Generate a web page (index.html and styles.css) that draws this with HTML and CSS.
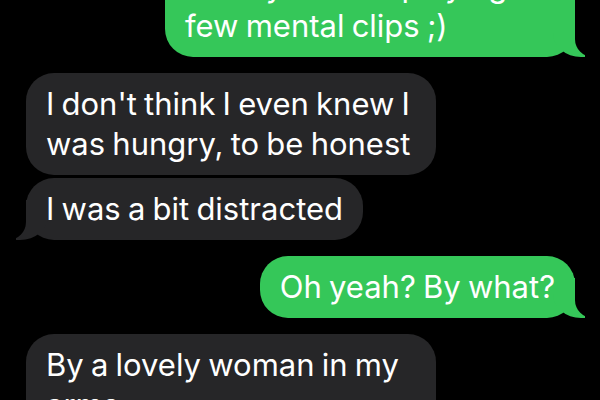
FILE: index.html
```html
<!DOCTYPE html>
<html lang="en">
<head>
    <meta charset="UTF-8">
    <meta name="viewport" content="width=device-width, initial-scale=1.0">
    <title>Messages</title>
    <link rel="stylesheet" href="styles.css">
</head>
<body>
    <div class="chat">
        <div class="msg sent tail">Mostly I was replaying a few mental clips ;)</div>
        <div class="msg received">I don't think I even knew I was hungry, to be honest</div>
        <div class="msg received tail">I was a bit distracted</div>
        <div class="msg sent tail">Oh yeah? By what?</div>
        <div class="msg received">By a lovely woman in my arms...</div>
    </div>
</body>
</html>
```

FILE: styles.css
```css
body {
    margin: 0;
    padding: 0;
    background: #000;
    font-family: Inter, "Liberation Sans", Arial, sans-serif;
    overflow: hidden;
}

.chat {
    display: flex;
    flex-direction: column;
    gap: 3px;
    margin-top: -45px;
    padding: 0 25px 0 26px;
}

.msg {
    position: relative;
    z-index: 0;
    max-width: 370px;
    padding: 11px 20px;
    border-radius: 28px;
    font-size: 31px;
    line-height: 40px;
    word-spacing: -1.5px;
    color: #fff;
}

.tail + .msg {
    margin-top: 13px;
}

.sent {
    align-self: flex-end;
    background: #35c759;
}

.received {
    align-self: flex-start;
    background: #262628;
}

/* bubble tails */
.tail::before,
.tail::after {
    content: "";
    position: absolute;
    z-index: -1;
    bottom: 0;
    height: 40px;
}

.sent.tail::before {
    right: -10px;
    width: 32px;
    background: #35c759;
    border-bottom-left-radius: 28px 24px;
}

.sent.tail::after {
    right: -40px;
    width: 40px;
    background: #000;
    border-bottom-left-radius: 18px;
}

.received.tail::before {
    left: -10px;
    width: 32px;
    background: #262628;
    border-bottom-right-radius: 28px 24px;
}

.received.tail::after {
    left: -40px;
    width: 40px;
    background: #000;
    border-bottom-right-radius: 18px;
}
```
